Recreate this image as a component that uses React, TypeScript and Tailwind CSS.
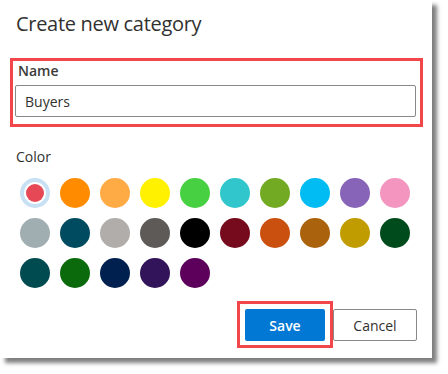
import React, { useState } from 'react';

const COLORS = [
  '#e74856', '#ff8c00', '#ffab45', '#fff100', '#47d041', '#30c6cc', '#73aa24', '#00bcf2', '#8764b8', '#f495bf',
  '#a0aeb2', '#004b60', '#b1adab', '#5d5a58', '#000000', '#750b1c', '#ca5010', '#ab620d', '#c19c00', '#004b1c',
  '#004b50', '#0b6a0b', '#002050', '#32145a', '#5c005c',
];

export default function App() {
  const [name, setName] = useState('Buyers');
  const [selected, setSelected] = useState(0);

  return (
    <div className="w-[448px] h-[374px] bg-white font-['Open_Sans','Noto_Sans',sans-serif] text-[#323130]">
      {/* dialog card */}
      <div className="w-[432px] h-[358px] bg-white shadow-[5px_5px_4px_rgba(0,0,0,0.5)] flex flex-col">
        <h1 className="pl-[16px] pt-[10px] text-[20px] leading-[28px] font-normal tracking-[-0.3px]">
          Create new category
        </h1>

        {/* name field (highlighted) */}
        <div className="mt-[20px] ml-[10px] w-[413px] border-[3px] border-[#f2464a] pl-[2px] pr-[4px] pb-[7px]">
          <label className="block pl-[3px] text-[14px] leading-[20px] font-semibold text-[#3b3a39]">Name</label>
          <input
            value={name}
            onChange={e => setName(e.target.value)}
            className="mt-[4px] w-full h-[32px] border border-[#8a8886] rounded-[2px] px-[9px] text-[14px] text-[#323130] outline-none"
          />
        </div>

        {/* color picker */}
        <div className="mt-[20px] pl-[16px] text-[14px] leading-[20px]">Color</div>
        <div className="mt-[11px] ml-[20px] grid grid-cols-[repeat(10,30px)] gap-[10px]">
          {COLORS.map((c, i) => (
            <button
              key={c}
              onClick={() => setSelected(i)}
              className="w-[30px] h-[30px] rounded-full flex items-center justify-center"
              style={{ backgroundColor: i === selected ? '#c7e0f4' : c }}
            >
              {i === selected && (
                <span className="w-[22px] h-[22px] rounded-full bg-white flex items-center justify-center">
                  <span className="w-[18px] h-[18px] rounded-full" style={{ backgroundColor: c }} />
                </span>
              )}
            </button>
          ))}
        </div>

        {/* actions */}
        <div className="mt-[13px] ml-[237px] flex items-start">
          <div className="border-[3px] border-[#f2464a] pt-[5px] pb-[4px] px-[5px]">
            <button className="w-[80px] h-[32px] bg-[#0078d4] text-white text-[14px] font-semibold rounded-[2px]">
              Save
            </button>
          </div>
          <button className="mt-[8px] w-[84px] h-[32px] bg-white border border-[#8a8886] rounded-[2px] text-[14px]">
            Cancel
          </button>
        </div>
      </div>
    </div>
  );
}
